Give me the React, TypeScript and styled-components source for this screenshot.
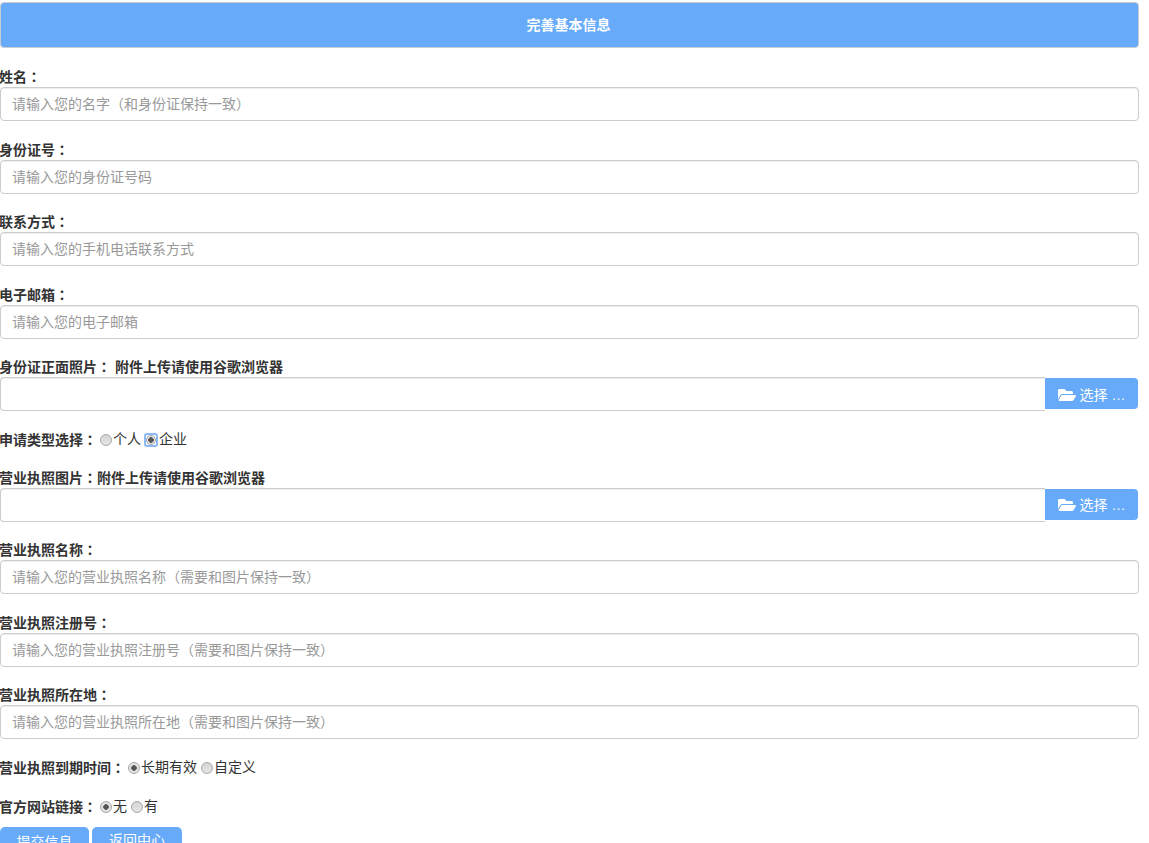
import type { ReactNode } from 'react';
import styled, { createGlobalStyle } from 'styled-components';
import { FaFolderOpen } from 'react-icons/fa';

const GlobalStyle = createGlobalStyle`
  html {
    overflow: hidden;
  }

  body {
    margin: 0;
    background: #fff;
    color: #333;
    font-family: "Liberation Sans", "Noto Sans CJK SC", sans-serif;
    font-size: 14px;
    line-height: 20px;
  }
`;

const Page = styled.form`
  width: 1139px;
  padding-top: 2px;
`;

const Banner = styled.div`
  height: 46px;
  margin-bottom: 15.4px;
  padding-right: 2px;
  display: flex;
  align-items: center;
  justify-content: center;
  background: #66aaf9;
  border: 1px solid #c8ccd2;
  border-radius: 4px;
  box-sizing: border-box;
  color: #fff;
  font-size: 14px;
  font-weight: 700;
`;

const Group = styled.div`
  margin-bottom: 15px;
`;

const Label = styled.label`
  display: block;
  height: 23.6px;
  margin-left: -1px;
  padding-top: 2.6px;
  box-sizing: border-box;
  font-weight: 700;
  color: #333;
`;

// the colon sits centred in its cell in the reference, which the TC cut does
const Colon = styled.span`
  font-family: "Noto Sans CJK TC", sans-serif;
`;

const TextInput = styled.input`
  display: block;
  width: 100%;
  height: 34px;
  padding: 6px 11px;
  box-sizing: border-box;
  border: 1px solid #ccc;
  border-radius: 4px;
  box-shadow: inset 0 1px 1px rgba(0, 0, 0, 0.075);
  font: inherit;
  color: #555;
  outline: none;

  &::placeholder {
    color: #999;
    opacity: 1;
  }
`;

const FileRow = styled.div`
  display: flex;
  align-items: flex-start;
  height: 34px;
`;

const FileCaption = styled.div`
  width: 1045px;
  height: 34px;
  box-sizing: border-box;
  border: 1px solid #ccc;
  border-right: none;
  border-radius: 4px 0 0 4px;
  box-shadow: inset 0 1px 1px rgba(0, 0, 0, 0.075);
`;

const FileButton = styled.button`
  width: 93px;
  height: 31px;
  margin-top: 1px;
  padding: 2px 0 0;
  display: flex;
  align-items: center;
  justify-content: center;
  gap: 4px;
  background: #66aaf9;
  border: none;
  border-radius: 0 4px 4px 0;
  color: #fff;
  font: inherit;

  svg {
    width: 18px;
    height: 16px;
  }
`;

const RadioRow = styled.div<{ $above: number; $below: number }>`
  display: flex;
  align-items: center;
  height: 20px;
  margin-left: -1px;
  padding-top: ${({ $above }) => $above}px;
  margin-bottom: ${({ $below }) => $below}px;
`;

const RadioTitle = styled.span`
  font-weight: 700;
  white-space: pre;
  margin-right: 1px;
`;

const RadioDot = styled.input`
  appearance: none;
  width: 12px;
  height: 12px;
  margin: 1px 1px 0 2px;
  flex: none;
  box-sizing: border-box;
  border: 1px solid #a9a9a9;
  border-radius: 50%;
  background: linear-gradient(#d4d4d4, #e6e6e6);

  &:checked {
    background: radial-gradient(circle, #555 0 2.5px, #e2e2e2 3px);
  }
`;

const FocusRing = styled.span`
  display: inline-flex;
  align-items: center;
  justify-content: center;
  width: 14px;
  height: 14px;
  margin: 1px 1px 0 1px;
  box-sizing: border-box;
  border: 2px solid #8cb8f5;
  border-radius: 3px;

  ${RadioDot} {
    width: 10px;
    height: 10px;
    margin: 0;
  }
`;

const RadioText = styled.span`
  color: #333;
  margin-right: 2px;
`;

const Actions = styled.div`
  display: flex;
  gap: 3px;
`;

const ActionButton = styled.button<{ $width: number; $lift: number }>`
  width: ${({ $width }) => $width}px;
  height: 34px;
  padding: 0 0 ${({ $lift }) => $lift}px;
  background: #66aaf9;
  border: none;
  border-radius: 5px;
  color: #fff;
  font: inherit;
`;

const fields = {
  top: [
    ['姓名', '请输入您的名字（和身份证保持一致）'],
    ['身份证号', '请输入您的身份证号码'],
    ['联系方式', '请输入您的手机电话联系方式'],
    ['电子邮箱', '请输入您的电子邮箱'],
  ],
  license: [
    ['营业执照名称', '请输入您的营业执照名称（需要和图片保持一致）'],
    ['营业执照注册号', '请输入您的营业执照注册号（需要和图片保持一致）'],
    ['营业执照所在地', '请输入您的营业执照所在地（需要和图片保持一致）'],
  ],
};

const TextField = ({ label, placeholder }: { label: string; placeholder: string }) => (
  <Group>
    <Label>
      {label}
      <Colon>：</Colon>
    </Label>
    <TextInput type="text" placeholder={placeholder} />
  </Group>
);

const FileField = ({ label }: { label: ReactNode }) => (
  <Group>
    <Label>{label}</Label>
    <FileRow>
      <FileCaption />
      <FileButton type="button">
        <FaFolderOpen />
        选择 …
      </FileButton>
    </FileRow>
  </Group>
);

export default function App() {
  return (
    <Page>
      <GlobalStyle />
      <Banner>完善基本信息</Banner>

      {fields.top.map(([label, placeholder]) => (
        <TextField key={label} label={label} placeholder={placeholder} />
      ))}

      <FileField
        label={
          <>
            身份证正面照片<Colon>：</Colon> 附件上传请使用谷歌浏览器
          </>
        }
      />

      <RadioRow $above={3} $below={14.6}>
        <RadioTitle>
          申请类型选择<Colon>：</Colon>
        </RadioTitle>
        <RadioDot type="radio" name="kind" />
        <RadioText>个人</RadioText>
        <FocusRing>
          <RadioDot type="radio" name="kind" defaultChecked />
        </FocusRing>
        <RadioText>企业</RadioText>
      </RadioRow>

      <FileField
        label={
          <>
            营业执照图片<Colon>：</Colon>附件上传请使用谷歌浏览器
          </>
        }
      />

      {fields.license.map(([label, placeholder]) => (
        <TextField key={label} label={label} placeholder={placeholder} />
      ))}

      <RadioRow $above={3} $below={19}>
        <RadioTitle>
          营业执照到期时间<Colon>：</Colon>
        </RadioTitle>
        <RadioDot type="radio" name="expire" defaultChecked />
        <RadioText>长期有效</RadioText>
        <RadioDot type="radio" name="expire" />
        <RadioText>自定义</RadioText>
      </RadioRow>

      <RadioRow $above={0} $below={10.6}>
        <RadioTitle>
          官方网站链接<Colon>：</Colon>
        </RadioTitle>
        <RadioDot type="radio" name="site" defaultChecked />
        <RadioText>无</RadioText>
        <RadioDot type="radio" name="site" />
        <RadioText>有</RadioText>
      </RadioRow>

      <Actions>
        <ActionButton type="button" $width={89} $lift={3}>
          提交信息
        </ActionButton>
        <ActionButton type="button" $width={90} $lift={8}>
          返回中心
        </ActionButton>
      </Actions>
    </Page>
  );
}
